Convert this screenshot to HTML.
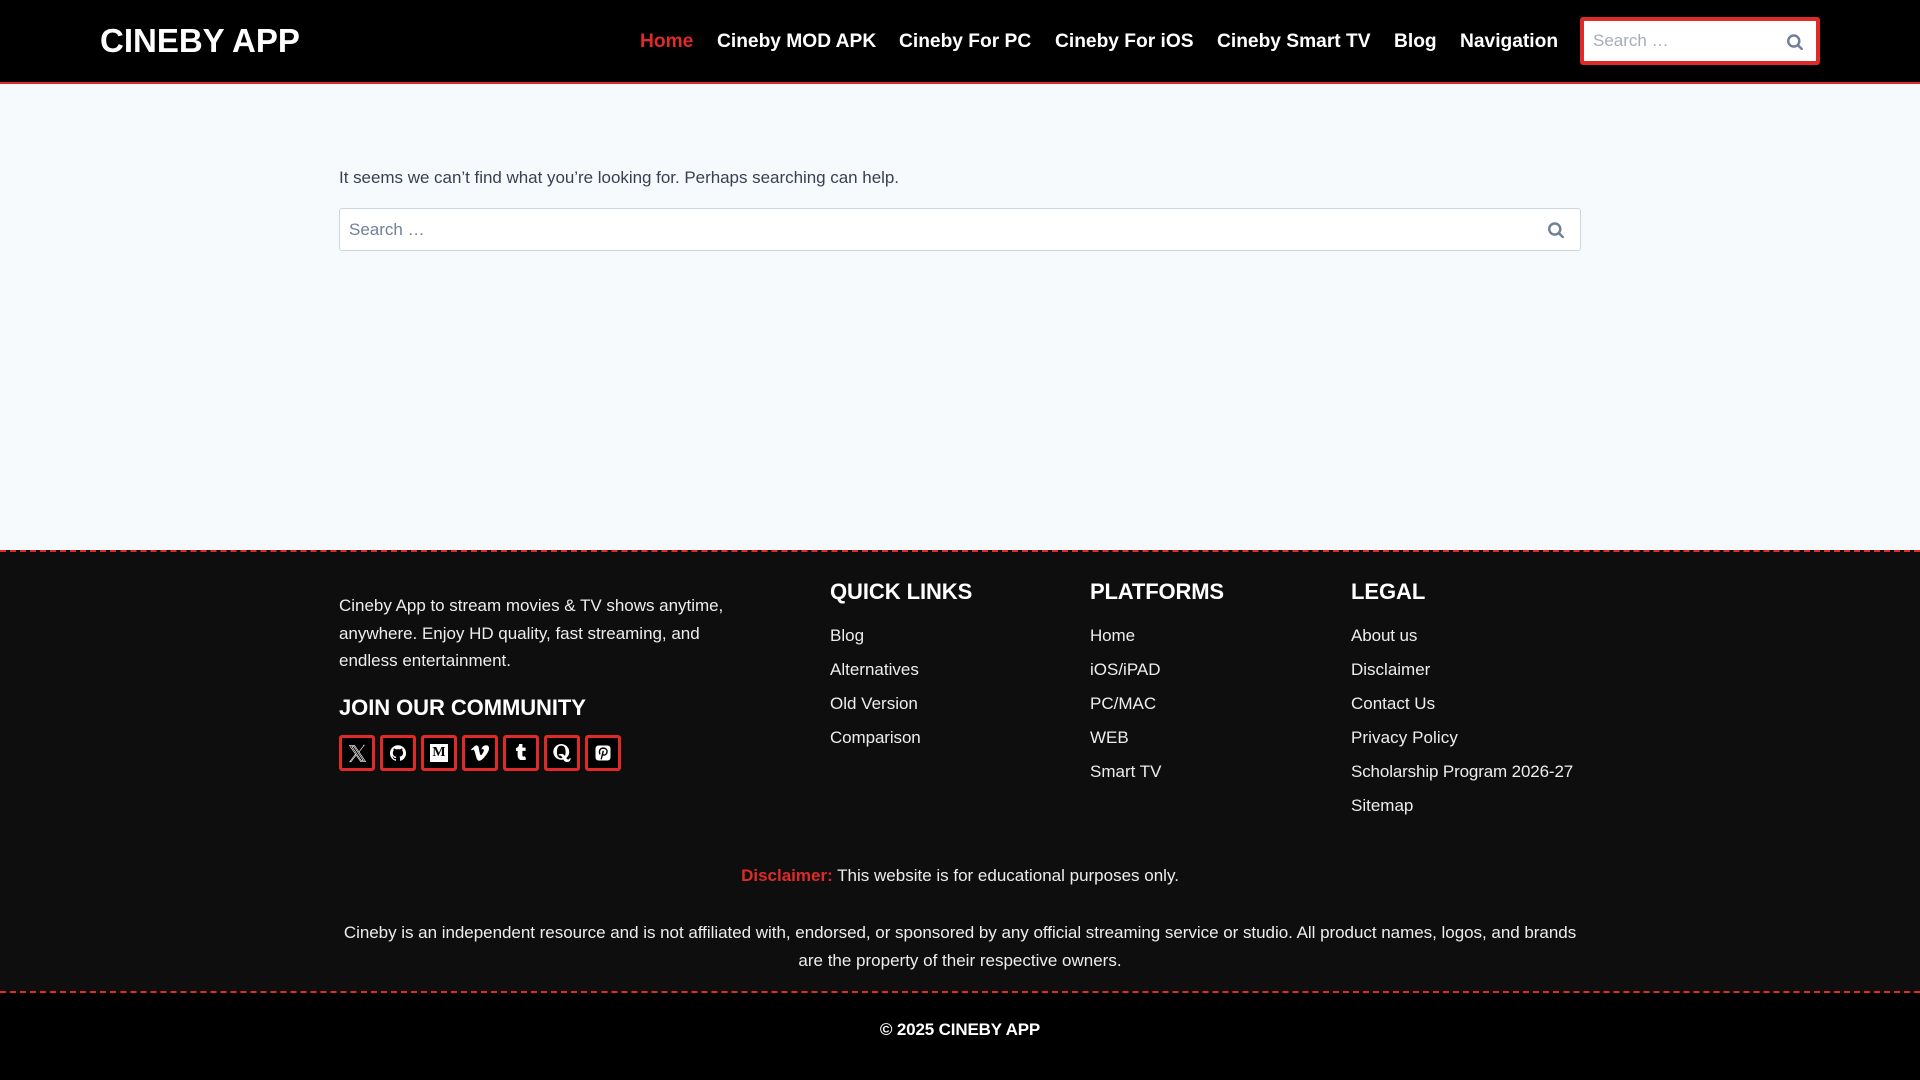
<!DOCTYPE html>
<html lang="en"><head><meta charset="utf-8"><title>Cineby App</title>
<style>
*{box-sizing:border-box}
html,body{margin:0;padding:0}
body{width:1920px;height:1080px;position:relative;overflow:hidden;background:#f7fafc;font-family:"Liberation Sans",sans-serif;font-size:17px;line-height:24px;color:#364152}
.a{position:absolute;white-space:nowrap}
#hd{left:0;top:0;width:1920px;height:84px;background:#000;border-bottom:2px solid #e02a2a}
.logo{left:100px;top:21px;font-size:33px;line-height:40px;font-weight:700;color:#fff}
.nav{top:30px;font-size:19.2px;line-height:24px;font-weight:700;color:#fff}
.sb{background:#fff}
.ph{color:#718096}
#f1{left:0;top:550px;width:1920px;height:443px;background:#0e0e0e}
#f2{left:0;top:993px;width:1920px;height:87px;background:#000}
.dash{left:0;width:1920px;height:2px;background:repeating-linear-gradient(90deg,#e02a2a 0,#e02a2a 6px,transparent 6px,transparent 10.0209px)}
.t{color:#ededed}
.h{font-size:22px;line-height:28px;font-weight:700;color:#fff;letter-spacing:-.07px}
.i{position:absolute;top:735px;width:36px;height:36px;background:#000;border:3px solid #e02a2a;border-radius:3px}
.i svg{position:absolute;left:6px;top:6px;width:18px;height:18px;fill:#fff}
.c{left:0;width:1920px;text-align:center}
</style></head><body>
<div class="a" id="hd"></div>
<div class="a logo">CINEBY APP</div>
<div class="a nav" style="left:640px;color:#e02a2a">Home</div>
<div class="a nav" style="left:717px">Cineby MOD APK</div>
<div class="a nav" style="left:899px">Cineby For PC</div>
<div class="a nav" style="left:1055px">Cineby For iOS</div>
<div class="a nav" style="left:1217px">Cineby Smart TV</div>
<div class="a nav" style="left:1394px">Blog</div>
<div class="a nav" style="left:1460px">Navigation</div>
<div class="a sb" style="left:1580px;top:17px;width:240px;height:48px;border:4px solid #e02a2a;border-radius:3px"></div>
<div class="a" style="left:1593px;top:29px;color:#a6acb8;font-size:17px">Search …</div>
<svg class="a" style="left:1787px;top:32.500px" width="16" height="17.23" viewBox="0 0 26 28" fill="#718096"><path d="M18 13c0-3.859-3.141-7-7-7s-7 3.141-7 7 3.141 7 7 7 7-3.141 7-7zM26 26c0 1.094-.906 2-2 2-.531 0-1.047-.219-1.406-.594l-5.359-5.344c-1.828 1.266-4.016 1.937-6.234 1.937-6.078 0-11-4.922-11-11s4.922-11 11-11 11 4.922 11 11c0 2.219-.672 4.406-1.937 6.234l5.359 5.359c.359.359.578.875.578 1.406z"/></svg>

<div class="a" style="left:339px;top:166px;letter-spacing:-.03px">It seems we can’t find what you’re looking for. Perhaps searching can help.</div>
<div class="a sb" style="left:339px;top:208px;width:1242px;height:43px;border:1px solid #cbd5e0;border-radius:3px"></div>
<div class="a ph" style="left:349px;top:218px">Search …</div>
<svg class="a" style="left:1548px;top:221px" width="16" height="17.23" viewBox="0 0 26 28" fill="#718096"><path d="M18 13c0-3.859-3.141-7-7-7s-7 3.141-7 7 3.141 7 7 7 7-3.141 7-7zM26 26c0 1.094-.906 2-2 2-.531 0-1.047-.219-1.406-.594l-5.359-5.344c-1.828 1.266-4.016 1.937-6.234 1.937-6.078 0-11-4.922-11-11s4.922-11 11-11 11 4.922 11 11c0 2.219-.672 4.406-1.937 6.234l5.359 5.359c.359.359.578.875.578 1.406z"/></svg>

<div class="a" id="f1"></div>
<div class="a" id="f2"></div>
<div class="a dash" style="top:550px"></div>
<div class="a dash" style="top:991px"></div>

<div class="a t" style="left:339px;top:594px;letter-spacing:-.02px">Cineby App to stream movies &amp; TV shows anytime,</div>
<div class="a t" style="left:339px;top:622px;letter-spacing:-.02px">anywhere. Enjoy HD quality, fast streaming, and</div>
<div class="a t" style="left:339px;top:649px">endless entertainment.</div>
<div class="a h" style="left:339px;top:694px">JOIN OUR COMMUNITY</div>

<div class="i" style="left:339px"><svg style="left:6px;top:5.500px;width:19px;height:19px" viewBox="0 0 24 24"><path d="M19 1.500h1.500L13.600 10.400M10.400 13.800L3.700 22.500H2.200L9.400 13M8.300 1.800H1.800L16 22.200h6.200zM4.900 3.200h2.700L19.200 20.800h-2.600z" fill="none" stroke="#fff" stroke-width=".8"/></svg></div>
<div class="i" style="left:380px"><svg style="left:7px;top:6.500px;width:16px;height:16px" viewBox="0 0 24 24"><path d="M12 .3a12 12 0 0 0-3.800 23.400c.6.100.8-.3.8-.6v-2c-3.300.7-4-1.600-4-1.600-.6-1.400-1.400-1.800-1.400-1.800-1-.7.100-.7.100-.7 1.200 0 1.900 1.200 1.900 1.200 1 1.800 2.800 1.300 3.500 1 0-.8.4-1.300.7-1.600-2.700-.3-5.500-1.300-5.500-6 0-1.200.5-2.300 1.300-3.100-.2-.4-.6-1.600 0-3.200 0 0 1-.3 3.400 1.200a11.500 11.500 0 0 1 6 0c2.300-1.500 3.300-1.200 3.300-1.200.6 1.600.2 2.800 0 3.200.9.8 1.300 1.900 1.300 3.200 0 4.600-2.800 5.600-5.500 5.900.5.400.9 1 .9 2.200v3.300c0 .3.1.7.8.6A12 12 0 0 0 12 .3"/></svg></div>
<div class="i" style="left:421px"><div style="position:absolute;left:6px;top:6px;width:18px;height:18px;background:#fff;color:#000;font:700 14px/18px 'Liberation Serif',serif;text-align:center">M</div></div>
<div class="i" style="left:462px"><svg style="left:6px" viewBox="0 0 24 24"><path d="M23.977 6.417c-.105 2.338-1.739 5.543-4.894 9.609-3.268 4.247-6.026 6.370-8.290 6.370-1.409 0-2.578-1.294-3.553-3.881L5.322 11.400C4.603 8.816 3.834 7.522 3.010 7.522c-.179 0-.806.378-1.881 1.132L0 7.228c1.185-1.044 2.351-2.084 3.501-3.128C5.080 2.701 6.266 1.967 7.055 1.900c1.867-.18 3.016 1.100 3.447 3.838.465 2.953.789 4.789.971 5.507.539 2.450 1.131 3.674 1.776 3.674.502 0 1.256-.796 2.265-2.385 1.004-1.589 1.540-2.797 1.612-3.628.144-1.371-.395-2.061-1.614-2.061-.574 0-1.167.121-1.777.391 1.186-3.868 3.434-5.757 6.762-5.637 2.473.06 3.628 1.664 3.493 4.797z"/></svg></div>
<div class="i" style="left:503px"><svg style="left:7px;top:6px;width:16px;height:16px" viewBox="0 0 24 24"><path d="M14.563 24c-5.093 0-7.031-3.756-7.031-6.411V9.747H5.116V6.648c3.630-1.313 4.512-4.596 4.710-6.469C9.840.051 9.941 0 9.999 0h3.517v6.114h4.801v3.633h-4.820v7.470c.016 1.001.375 2.371 2.207 2.371h.09c.631-.02 1.486-.205 1.936-.419l1.156 3.425c-.436.636-2.400 1.374-4.156 1.404h-.178z" stroke="#fff" stroke-width="1.200"/></svg></div>
<div class="i" style="left:544px"><svg viewBox="0 0 24 24"><path d="M12.738 18.701c-.831-1.635-1.805-3.287-3.708-3.287-.362 0-.727.061-1.059.209l-.646-1.289c.786-.678 2.058-1.214 3.693-1.214 2.544 0 3.851 1.229 4.888 2.792.613-1.335.904-3.140.904-5.375 0-5.582-1.745-8.443-5.820-8.443-4.014 0-5.750 2.860-5.750 8.443 0 5.553 1.736 8.385 5.750 8.385.635 0 1.213-.07 1.748-.221zm.996 1.945c-.88.236-1.820.356-2.744.356-5.349 0-10.590-4.269-10.590-10.466C.4 4.271 5.641 0 10.990 0c5.433 0 10.622 4.241 10.622 10.536 0 3.502-1.634 6.348-4.009 8.187.767 1.151 1.557 1.917 2.657 1.917 1.201 0 1.685-.928 1.767-1.656h1.563c.092.970-.393 4.996-4.762 4.996-2.645 0-4.044-1.533-5.094-3.334z"/></svg></div>
<div class="i" style="left:585px"><svg viewBox="0 0 24 24"><rect x="2" y="2" width="20" height="20" rx="4" fill="#fff"/><path d="M12.400 9L9.600 20.500M8 13.800C6 9 8.500 5.500 12.300 5.500C16 5.500 17.800 8 17.300 11C16.800 14 14 15.600 11.500 14.200" fill="none" stroke="#000" stroke-width="1.900"/></svg></div>

<div class="a h" style="left:830px;top:578px">QUICK LINKS</div>
<div class="a h" style="left:1090px;top:578px;letter-spacing:-.15px">PLATFORMS</div>
<div class="a h" style="left:1351px;top:578px">LEGAL</div>

<div class="a t" style="left:830px;top:624px">Blog</div>
<div class="a t" style="left:830px;top:658px">Alternatives</div>
<div class="a t" style="left:830px;top:692px">Old Version</div>
<div class="a t" style="left:830px;top:726px;letter-spacing:-.1px">Comparison</div>

<div class="a t" style="left:1090px;top:624px;letter-spacing:-.1px">Home</div>
<div class="a t" style="left:1090px;top:658px">iOS/iPAD</div>
<div class="a t" style="left:1090px;top:692px">PC/MAC</div>
<div class="a t" style="left:1090px;top:726px">WEB</div>
<div class="a t" style="left:1090px;top:760px">Smart TV</div>

<div class="a t" style="left:1351px;top:624px;letter-spacing:-.1px">About us</div>
<div class="a t" style="left:1351px;top:658px">Disclaimer</div>
<div class="a t" style="left:1351px;top:692px">Contact Us</div>
<div class="a t" style="left:1351px;top:726px;letter-spacing:.08px">Privacy Policy</div>
<div class="a t" style="left:1351px;top:760px;letter-spacing:-.14px">Scholarship Program 2026-27</div>
<div class="a t" style="left:1351px;top:794px">Sitemap</div>

<div class="a c t" style="top:864px"><b style="color:#e02a2a">Disclaimer:</b> This website is for educational purposes only.</div>
<div class="a c t" style="top:921px;letter-spacing:-.03px">Cineby is an independent resource and is not affiliated with, endorsed, or sponsored by any official streaming service or studio. All product names, logos, and brands</div>
<div class="a c t" style="top:949px">are the property of their respective owners.</div>
<div class="a c" style="top:1018px;color:#fff;font-weight:700;letter-spacing:-.15px">© 2025 CINEBY APP</div>
</body></html>
